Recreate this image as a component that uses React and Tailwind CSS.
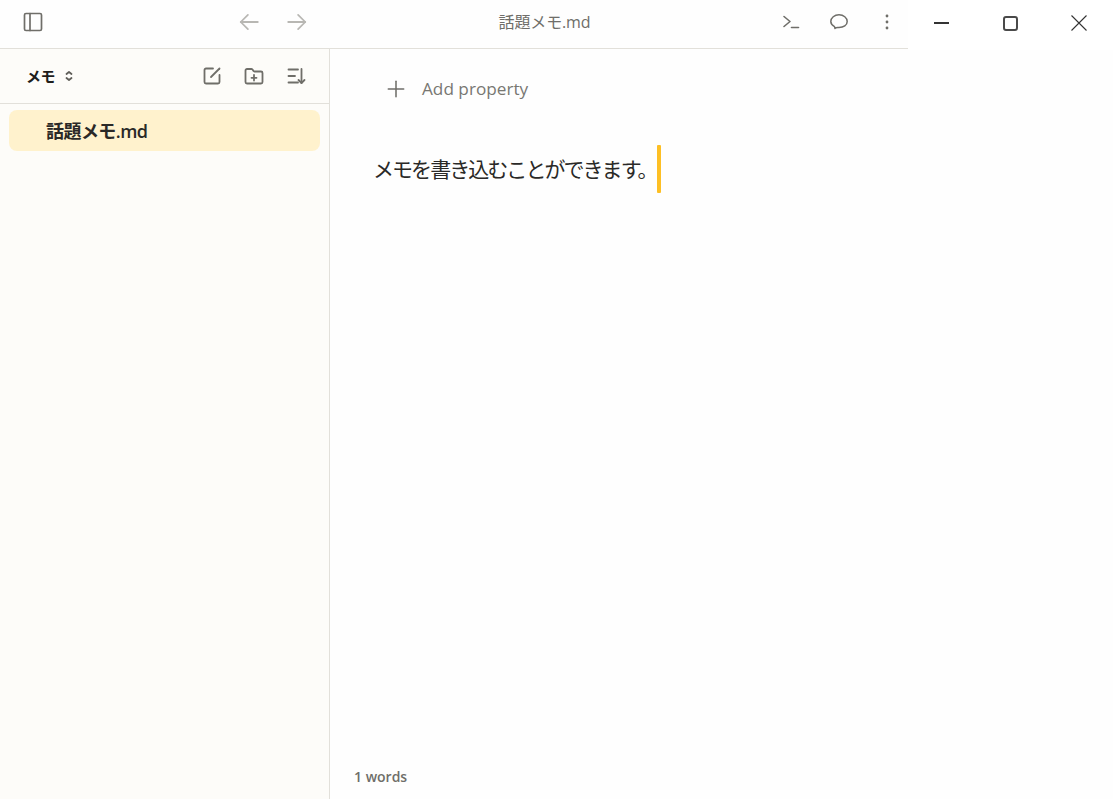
import React from "react";

function Ic({ children, size = 20, color = "#6f6e69", sw = 1.7, className = "" }) {
  return (
    <svg width={size} height={size} viewBox="0 0 20 20" fill="none" stroke={color} strokeWidth={sw} strokeLinecap="round" strokeLinejoin="round" className={className}>
      {children}
    </svg>
  );
}

export default function App() {
  return (
    <div className="w-[1113px] h-[799px] flex flex-col overflow-hidden bg-[#fefefe] text-[#1f1e1c] font-['Open_Sans','Noto_Sans_CJK_JP',sans-serif]">
      <header className="h-[49px] shrink-0 flex items-start bg-[#fefefe]">
        <div className="w-[908px] h-[49px] border-b border-[#e2e0da] flex items-center pb-[4px]">
          <div className="w-[66px] flex justify-center">
            <Ic size={20} sw={1.7}><rect x="1.5" y="1.5" width="17" height="17" rx="1.5" /><path d="M7 1.5v17" /></Ic>
          </div>
          <div className="ml-[172px] flex items-center gap-[26px]">
            <Ic size={22} color="#b8b7b3" sw={1.6}><path d="M18 10H2.500" /><path d="M9 3.500 2.500 10 9 16.500" /></Ic>
            <Ic size={22} color="#b8b7b3" sw={1.6}><path d="M2 10h15.500" /><path d="M11 3.500 17.500 10 11 16.500" /></Ic>
          </div>
          <div className="ml-[190px] w-[93px] text-center text-[16px] leading-[22px] tracking-[-0.12px] text-[#6f6e69] whitespace-nowrap">話題メモ.md</div>
          <div className="ml-auto flex items-center mr-[11px] gap-[28px]">
            <Ic size={20} sw={1.6}><path d="m3 4.500 6 5-6 5" /><path d="M10.500 15.500h7" /></Ic>
            <Ic size={20} sw={1.5}><path d="M6 16.500 5.500 14.600C3.400 13.400 1.800 11.600 1.800 9.500 1.800 5.700 5.500 2.800 10 2.800S18.200 5.700 18.200 9.500 14.500 15.600 10 15.600C9 15.600 8 15.500 7.200 15.700Z" /></Ic>
            <svg width="20" height="20" viewBox="0 0 20 20" fill="#6f6e69"><circle cx="10" cy="4" r="1.400" /><circle cx="10" cy="10" r="1.400" /><circle cx="10" cy="16" r="1.400" /></svg>
          </div>
        </div>
        <div className="flex-1 h-[50px] bg-white flex items-center pb-[4px]">
          <div className="w-[67px] flex justify-center">
            <div className="w-[15px] h-[2px] bg-[#333333]" />
          </div>
          <div className="w-[70px] flex justify-center">
            <div className="w-[15px] h-[15px] rounded-[3px] border-2 border-[#4a4a4a]" />
          </div>
          <div className="w-[68px] flex justify-center">
            <svg width="16" height="16" viewBox="0 0 16 16" stroke="#333333" strokeWidth="1.100" fill="none"><path d="M0.500 0.500l15 15M15.500 0.500l-15 15" /></svg>
          </div>
        </div>
      </header>
      <div className="flex-1 flex min-h-0">
        <aside className="w-[330px] shrink-0 bg-[#fdfcf9] border-r border-[#e2e0da] flex flex-col">
          <div className="h-[55px] shrink-0 border-b border-[#e2e0da] flex items-center pl-[26px] pr-[23px]">
            <span className="text-[15px] font-semibold leading-[22px] tracking-[-0.6px] text-[#1f1e1c]">メモ</span>
            <svg width="10" height="14" viewBox="0 0 10 14" fill="none" stroke="#5f5e59" strokeWidth="1.800" strokeLinecap="round" strokeLinejoin="round" className="ml-[9px]"><path d="M2.500 5 5 3 7.500 5" /><path d="M2.500 9 5 11 7.500 9" /></svg>
            <div className="ml-auto flex items-center gap-[22px]">
              <Ic size={20} sw={1.8}><path d="M11 2.500H4A1.500 1.500 0 0 0 2.500 4v12A1.500 1.500 0 0 0 4 17.500h12a1.500 1.500 0 0 0 1.500-1.500V9" /><path d="M17.500 2.500 9 11" /></Ic>
              <Ic size={20} sw={1.8}><path d="M10 9v5.500" /><path d="M7.500 11.800h5" /><path d="M17 17.500a1.500 1.500 0 0 0 1.500-1.500V7A1.500 1.500 0 0 0 17 5.500h-6.500a1.500 1.500 0 0 1-1.200-.7l-.8-1.300A1.500 1.500 0 0 0 7.300 3H3A1.500 1.500 0 0 0 1.500 4.500V16A1.500 1.500 0 0 0 3 17.500Z" /></Ic>
              <Ic size={20} sw={1.800}><path d="M2.500 3.500h9.500" /><path d="M2.500 10h6.500" /><path d="M2.500 16.500h9.500" /><path d="M15.500 3v14" /><path d="m18.500 14-3 3-3-3" /></Ic>
            </div>
          </div>
          <div className="mt-[6px] mx-[9px] h-[41px] rounded-[8px] bg-[#fff2cd] flex items-center pl-[37px] text-[18px] font-semibold tracking-[-0.55px] leading-[24px] text-[#2a2927]">話題メモ.md</div>
        </aside>
        <main className="flex-1 flex flex-col min-w-0">
          <div className="h-[79px] shrink-0 flex items-center pl-[55px]">
            <Ic size={22} sw={1.400}><path d="M3 10h14" /><path d="M10 3v14" /></Ic>
            <span className="ml-[15px] text-[17.2px] leading-[24px] text-[#787772]">Add property</span>
          </div>
          <div className="mt-[17px] ml-[43px] h-[48px] flex items-center">
            <span className="text-[21px] leading-[32px] tracking-[-1.95px] text-[#2a2927] whitespace-nowrap">メモを書き込むことができます。</span>
            <div className="w-[4px] h-[48px] rounded-[1px] bg-[#fdbf24]" />
          </div>
          <div className="mt-auto h-[44px] flex items-center pl-[24px] pb-[2px] text-[14px] font-semibold text-[#6f6e69]">1 words</div>
        </main>
      </div>
    </div>
  );
}
